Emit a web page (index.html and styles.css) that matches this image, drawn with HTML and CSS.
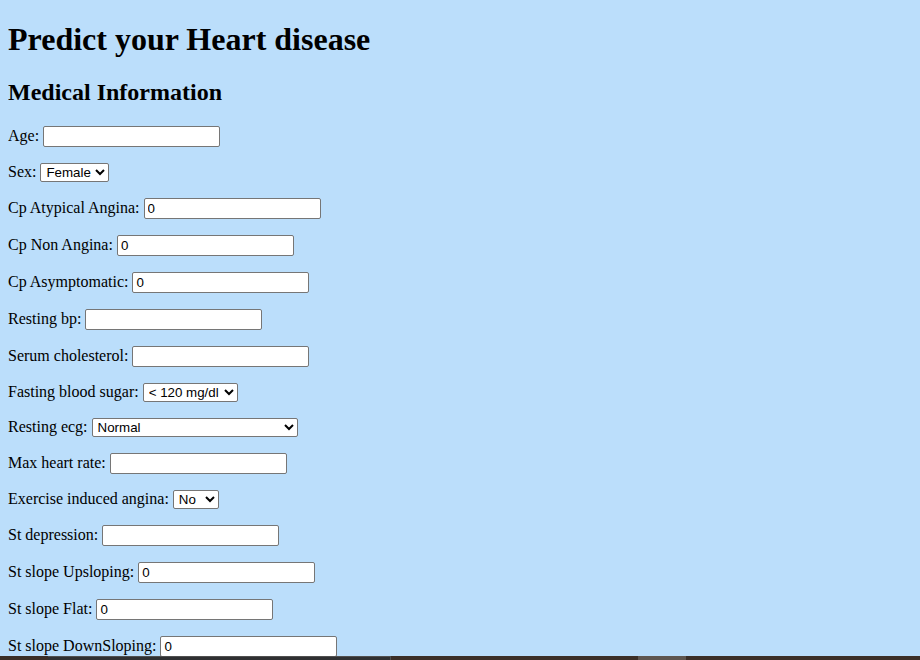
FILE: index.html
```html
<!DOCTYPE html>
<html lang="en">
<head>
<meta charset="utf-8">
<title>Heart disease prediction</title>
<link rel="stylesheet" href="styles.css">
</head>
<body>
<h1>Predict your Heart disease</h1>
<form class="form">
<h2>Medical Information</h2>
<p>Age: <input class="text" type="text"></p>
<p>Sex: <select class="sel sel-sex"><option>Female</option><option>Male</option></select></p>
<p>Cp Atypical Angina: <input class="text" type="text" value="0"></p>
<p>Cp Non Angina: <input class="text" type="text" value="0"></p>
<p>Cp Asymptomatic: <input class="text" type="text" value="0"></p>
<p>Resting bp: <input class="text" type="text"></p>
<p>Serum cholesterol: <input class="text" type="text"></p>
<p>Fasting blood sugar: <select class="sel sel-fbs"><option>&lt; 120 mg/dl</option><option>&gt; 120 mg/dl</option></select></p>
<p>Resting ecg: <select class="sel sel-ecg"><option>Normal</option><option>ST-T wave abnormality</option><option>Left ventricular hypertrophy</option></select></p>
<p>Max heart rate: <input class="text" type="text"></p>
<p>Exercise induced angina: <select class="sel sel-ex"><option>No</option><option>Yes</option></select></p>
<p>St depression: <input class="text" type="text"></p>
<p>St slope Upsloping: <input class="text" type="text" value="0"></p>
<p>St slope Flat: <input class="text" type="text" value="0"></p>
<p>St slope DownSloping: <input class="text" type="text" value="0"></p>
</form>
<div class="taskbar">
  <div class="tb-a"></div>
  <div class="tb-b"></div>
  <div class="tb-c"></div>
  <div class="tb-d"></div>
  <div class="tb-e"></div>
</div>
</body>
</html>
```
FILE: styles.css
```css
html {
  background: #bbdefb;
}
body {
  margin: 8px;
  font-family: "Liberation Serif", "Times New Roman", serif;
  font-size: 16px;
  color: #000;
  background: #bbdefb;
}
h1 {
  font-size: 32px;
  margin: 12.5px 0 21.5px;
}
h2 {
  font-size: 24px;
  margin: 19.92px 0;
}
p {
  margin: 16px 0;
}
.text {
  box-sizing: border-box;
  width: 177px;
  height: 21px;
  padding: 1px 3px;
  border: 1px solid #767676;
  border-radius: 2px;
  background: #fff;
  font-family: "Liberation Sans", Arial, sans-serif;
  font-size: 13.333px;
  color: #000;
  vertical-align: baseline;
}
.sel {
  box-sizing: border-box;
  height: 19px;
  padding: 0 0 0 1px;
  border: 1px solid #767676;
  border-radius: 2px;
  background: #fff;
  font-family: "Liberation Sans", Arial, sans-serif;
  font-size: 13.333px;
  color: #000;
}
.sel-sex { width: 69px; }
.sel-fbs { width: 95px; }
.sel-ecg { width: 206px; }
.sel-ex { width: 46px; }
.taskbar {
  position: fixed;
  left: 0;
  right: 0;
  bottom: 0;
  height: 4px;
  display: flex;
}
.tb-a { width: 48px; background: #3a2e27; }
.tb-b { width: 343px; background: #2f3032; border-top: 1px solid #505050; border-right: 1px solid #505050; box-sizing: border-box; }
.tb-c { width: 247px; background: #3b2f28; }
.tb-d { width: 48px; background: #5e5650; }
.tb-e { flex: 1; background: #3b2f28; }
```
